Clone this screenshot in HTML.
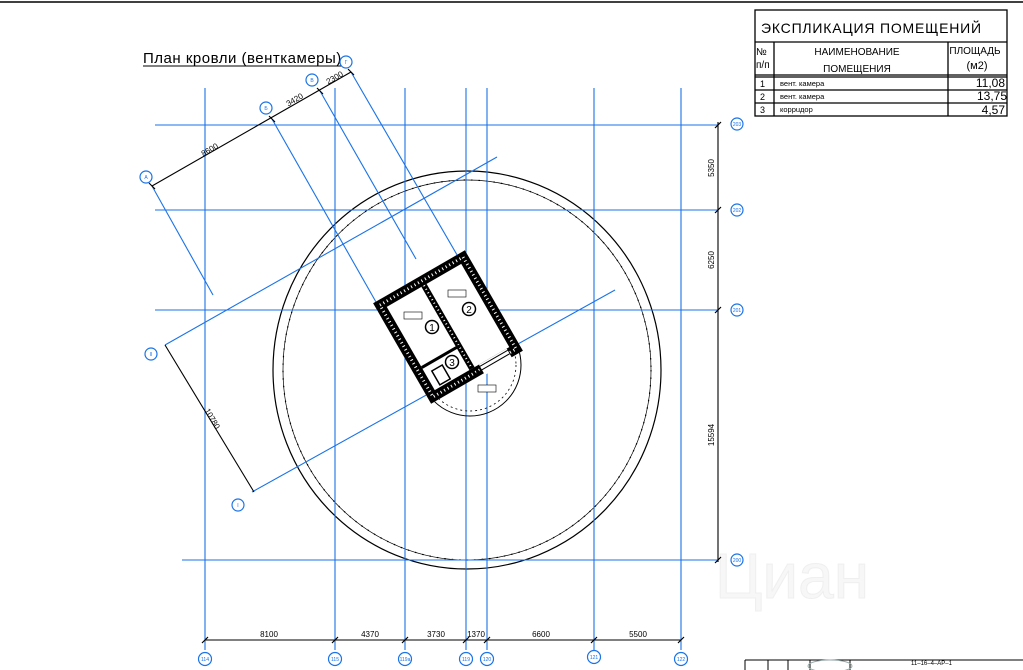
<!DOCTYPE html>
<html><head><meta charset="utf-8"><style>
html,body{margin:0;padding:0;background:#fff;width:1023px;height:670px;overflow:hidden}
svg{display:block}
text{font-family:"Liberation Sans",sans-serif}
</style></head><body>
<svg width="1023" height="670" viewBox="0 0 1023 670" xmlns="http://www.w3.org/2000/svg">
<line x1="0" y1="2" x2="1023" y2="2" stroke="#000" stroke-width="1.5"/>
<!-- watermark -->
<text x="715" y="598" font-size="64" fill="#f7f7f7" stroke="#efefef" stroke-width="1">Циан</text>
<!-- title -->
<text x="143" y="63" font-size="15" fill="#000" letter-spacing="0.5">План кровли (венткамеры)</text>
<line x1="143" y1="66" x2="350" y2="66" stroke="#000" stroke-width="1"/>
<!-- big circles -->
<ellipse cx="467" cy="370" rx="194" ry="199" fill="none" stroke="#000" stroke-width="1.2"/>
<ellipse cx="467" cy="370" rx="184" ry="190" fill="none" stroke="#000" stroke-width="1.2" stroke-dasharray="1.5 6"/>
<ellipse cx="467" cy="370" rx="184" ry="190" fill="none" stroke="#000" stroke-width="0.7"/>
<!-- blue grid -->
<g stroke="#1a73e8" stroke-width="1.1">
<line x1="205" y1="88" x2="205" y2="650"/>
<line x1="335" y1="88" x2="335" y2="650"/>
<line x1="405" y1="88" x2="405" y2="650"/>
<line x1="466" y1="88" x2="466" y2="650"/>
<line x1="487" y1="88" x2="487" y2="650"/>
<line x1="594" y1="88" x2="594" y2="650"/>
<line x1="681" y1="88" x2="681" y2="650"/>
<line x1="155" y1="125" x2="718" y2="125"/>
<line x1="155" y1="210" x2="718" y2="210"/>
<line x1="155" y1="310" x2="718" y2="310"/>
<line x1="182" y1="560" x2="718" y2="560"/>
<line x1="152" y1="186" x2="213" y2="295"/>
<line x1="272" y1="119" x2="376" y2="302"/>
<line x1="320" y1="91" x2="416" y2="259"/>
<line x1="351" y1="72" x2="460" y2="260"/>
<line x1="165" y1="345" x2="497" y2="157"/>
<line x1="252" y1="492" x2="615" y2="290"/>
</g>
<g fill="#fff" stroke="#1a73e8" stroke-width="1.2">
<circle cx="146" cy="177" r="6"/><circle cx="266" cy="108" r="6"/><circle cx="312" cy="80" r="6"/><circle cx="346" cy="62" r="6"/>
<circle cx="151" cy="354" r="6"/><circle cx="238" cy="505" r="6"/>
<circle cx="737" cy="124" r="6"/><circle cx="737" cy="210" r="6"/><circle cx="737" cy="310" r="6"/><circle cx="737" cy="560" r="6"/>
<circle cx="205" cy="659" r="6.5"/><circle cx="335" cy="659" r="6.5"/><circle cx="405" cy="659" r="6.5"/><circle cx="466" cy="659" r="6.5"/><circle cx="487" cy="659" r="6.5"/><circle cx="594" cy="657" r="6.5"/><circle cx="681" cy="659" r="6.5"/>
</g>
<g fill="#1a73e8" font-size="5" text-anchor="middle">
<text x="146" y="179">А</text><text x="266" y="110">Б</text><text x="312" y="82">В</text><text x="346" y="64">Г</text>
<text x="151" y="356">II</text><text x="238" y="507">I</text>
<text x="737" y="126">203</text><text x="737" y="212">202</text><text x="737" y="312">201</text><text x="737" y="562">200</text>
<text x="205" y="661">114</text><text x="335" y="661">115</text><text x="405" y="661">119а</text><text x="466" y="661">119</text><text x="487" y="661">120</text><text x="594" y="659">121</text><text x="681" y="661">122</text>
</g>
<g stroke="#000" stroke-width="1.1">
<line x1="205" y1="640" x2="681" y2="640"/>
<line x1="718" y1="122" x2="718" y2="562"/>
<line x1="152" y1="186" x2="351" y2="72"/>
<line x1="165" y1="345" x2="254" y2="492"/>
</g>
<g stroke="#000" stroke-width="1.2">
<path d="M202 643l6-6M332 643l6-6M402 643l6-6M463 643l6-6M484 643l6-6M591 643l6-6M678 643l6-6"/>
<path d="M715 128l6-6M715 213l6-6M715 313l6-6M715 563l6-6"/>
<path d="M149 183l6 6M269 116l6 6M317 88l6 6M348 69l6 6"/>
</g>
<g font-size="8" fill="#000" text-anchor="middle">
<text x="269" y="637">8100</text><text x="370" y="637">4370</text><text x="436" y="637">3730</text><text x="476" y="637">1370</text><text x="541" y="637">6600</text><text x="638" y="637">5500</text>
<text transform="translate(714,168) rotate(-90)">5350</text>
<text transform="translate(714,260) rotate(-90)">6250</text>
<text transform="translate(714,435) rotate(-90)">15594</text>
<text transform="translate(211,152) rotate(-30)">8600</text>
<text transform="translate(296,102) rotate(-30)">3420</text>
<text transform="translate(336,80) rotate(-30)">2300</text>
<text transform="translate(210,420) rotate(60)">10780</text>
</g>
<!-- stair circle -->
<circle cx="470" cy="365" r="51" fill="none" stroke="#000" stroke-width="1"/>
<circle cx="470" cy="365" r="46" fill="none" stroke="#000" stroke-width="0.8" stroke-dasharray="2 3"/>
<!-- building -->
<g transform="translate(448,327) rotate(-30)">
<rect x="-53" y="-58" width="106" height="116" fill="#fff"/>
<rect x="-48" y="-53" width="96" height="106" fill="none" stroke="#000" stroke-width="10"/>
<rect x="-48" y="-53" width="96" height="106" fill="none" stroke="#fff" stroke-width="3" stroke-dasharray="1 3"/>
<line x1="0" y1="-48" x2="0" y2="48" stroke="#000" stroke-width="6"/>
<line x1="0" y1="-48" x2="0" y2="48" stroke="#fff" stroke-width="2" stroke-dasharray="1 3"/>
<line x1="-43" y1="22" x2="0" y2="22" stroke="#000" stroke-width="3"/>
<rect x="-36" y="30" width="12" height="16" fill="none" stroke="#000" stroke-width="1.5"/>
<rect x="8" y="48" width="32" height="12" fill="#fff"/>
<line x1="0" y1="50" x2="40" y2="50" stroke="#000" stroke-width="1"/>
<line x1="0" y1="54" x2="40" y2="54" stroke="#000" stroke-width="1"/>
</g>
<g fill="#fff" stroke="#000" stroke-width="0.6">
<rect x="404" y="312" width="18" height="7"/><rect x="448" y="290" width="18" height="7"/><rect x="478" y="385" width="18" height="7"/>
</g>
<g fill="none" stroke="#000" stroke-width="1.5">
<circle cx="432" cy="327" r="6.5"/><circle cx="469" cy="309" r="6.5"/><circle cx="452" cy="362" r="6.5"/>
</g>
<g font-size="10" text-anchor="middle" fill="#000">
<text x="432" y="331">1</text><text x="469" y="313">2</text><text x="452" y="366">3</text>
</g>
<!-- table -->
<g fill="none" stroke="#000" stroke-width="1.3">
<rect x="755" y="10" width="252" height="106"/>
<line x1="755" y1="42" x2="1007" y2="42"/>
<line x1="755" y1="75" x2="1007" y2="75"/><line x1="755" y1="77" x2="1007" y2="77"/>
<line x1="755" y1="90" x2="1007" y2="90"/><line x1="755" y1="103" x2="1007" y2="103"/>
<line x1="774" y1="42" x2="774" y2="116"/><line x1="948" y1="42" x2="948" y2="116"/>
</g>
<g fill="#000">
<text x="761" y="33" font-size="14" letter-spacing="0.8">ЭКСПЛИКАЦИЯ  ПОМЕЩЕНИЙ</text>
<text x="756" y="55" font-size="10">№</text><text x="756" y="68" font-size="10">п/п</text>
<text x="857" y="55" font-size="10" text-anchor="middle">НАИМЕНОВАНИЕ</text>
<text x="857" y="72" font-size="10" text-anchor="middle">ПОМЕЩЕНИЯ</text>
<text x="975" y="54" font-size="10" text-anchor="middle">ПЛОЩАДЬ</text>
<text x="977" y="69" font-size="11" text-anchor="middle">(м2)</text>
<text x="760" y="87" font-size="9">1</text><text x="760" y="100" font-size="9">2</text><text x="760" y="113" font-size="9">3</text>
<text x="780" y="86" font-size="7.5">вент. камера</text><text x="780" y="99" font-size="7.5">вент. камера</text><text x="780" y="112" font-size="7.5">коррuдор</text>
<text x="1005" y="87" font-size="12" text-anchor="end">11,08</text><text x="1007" y="100" font-size="12" text-anchor="end">13,75</text><text x="1005" y="114" font-size="12" text-anchor="end">4,57</text>
</g>
<g stroke="#000" stroke-width="1" fill="none">
<line x1="745" y1="660" x2="1023" y2="660"/><line x1="745" y1="660" x2="745" y2="670"/>
<line x1="768" y1="660" x2="768" y2="670"/><line x1="788" y1="660" x2="788" y2="670"/><line x1="810" y1="660" x2="810" y2="670"/><line x1="850" y1="660" x2="850" y2="670"/>
<ellipse cx="830" cy="666" rx="22" ry="6" stroke="#9aa" stroke-width="1"/>
</g>
<text x="911" y="665" font-size="6" fill="#000">11–16–4–АР–1</text>
</svg>
</body></html>
